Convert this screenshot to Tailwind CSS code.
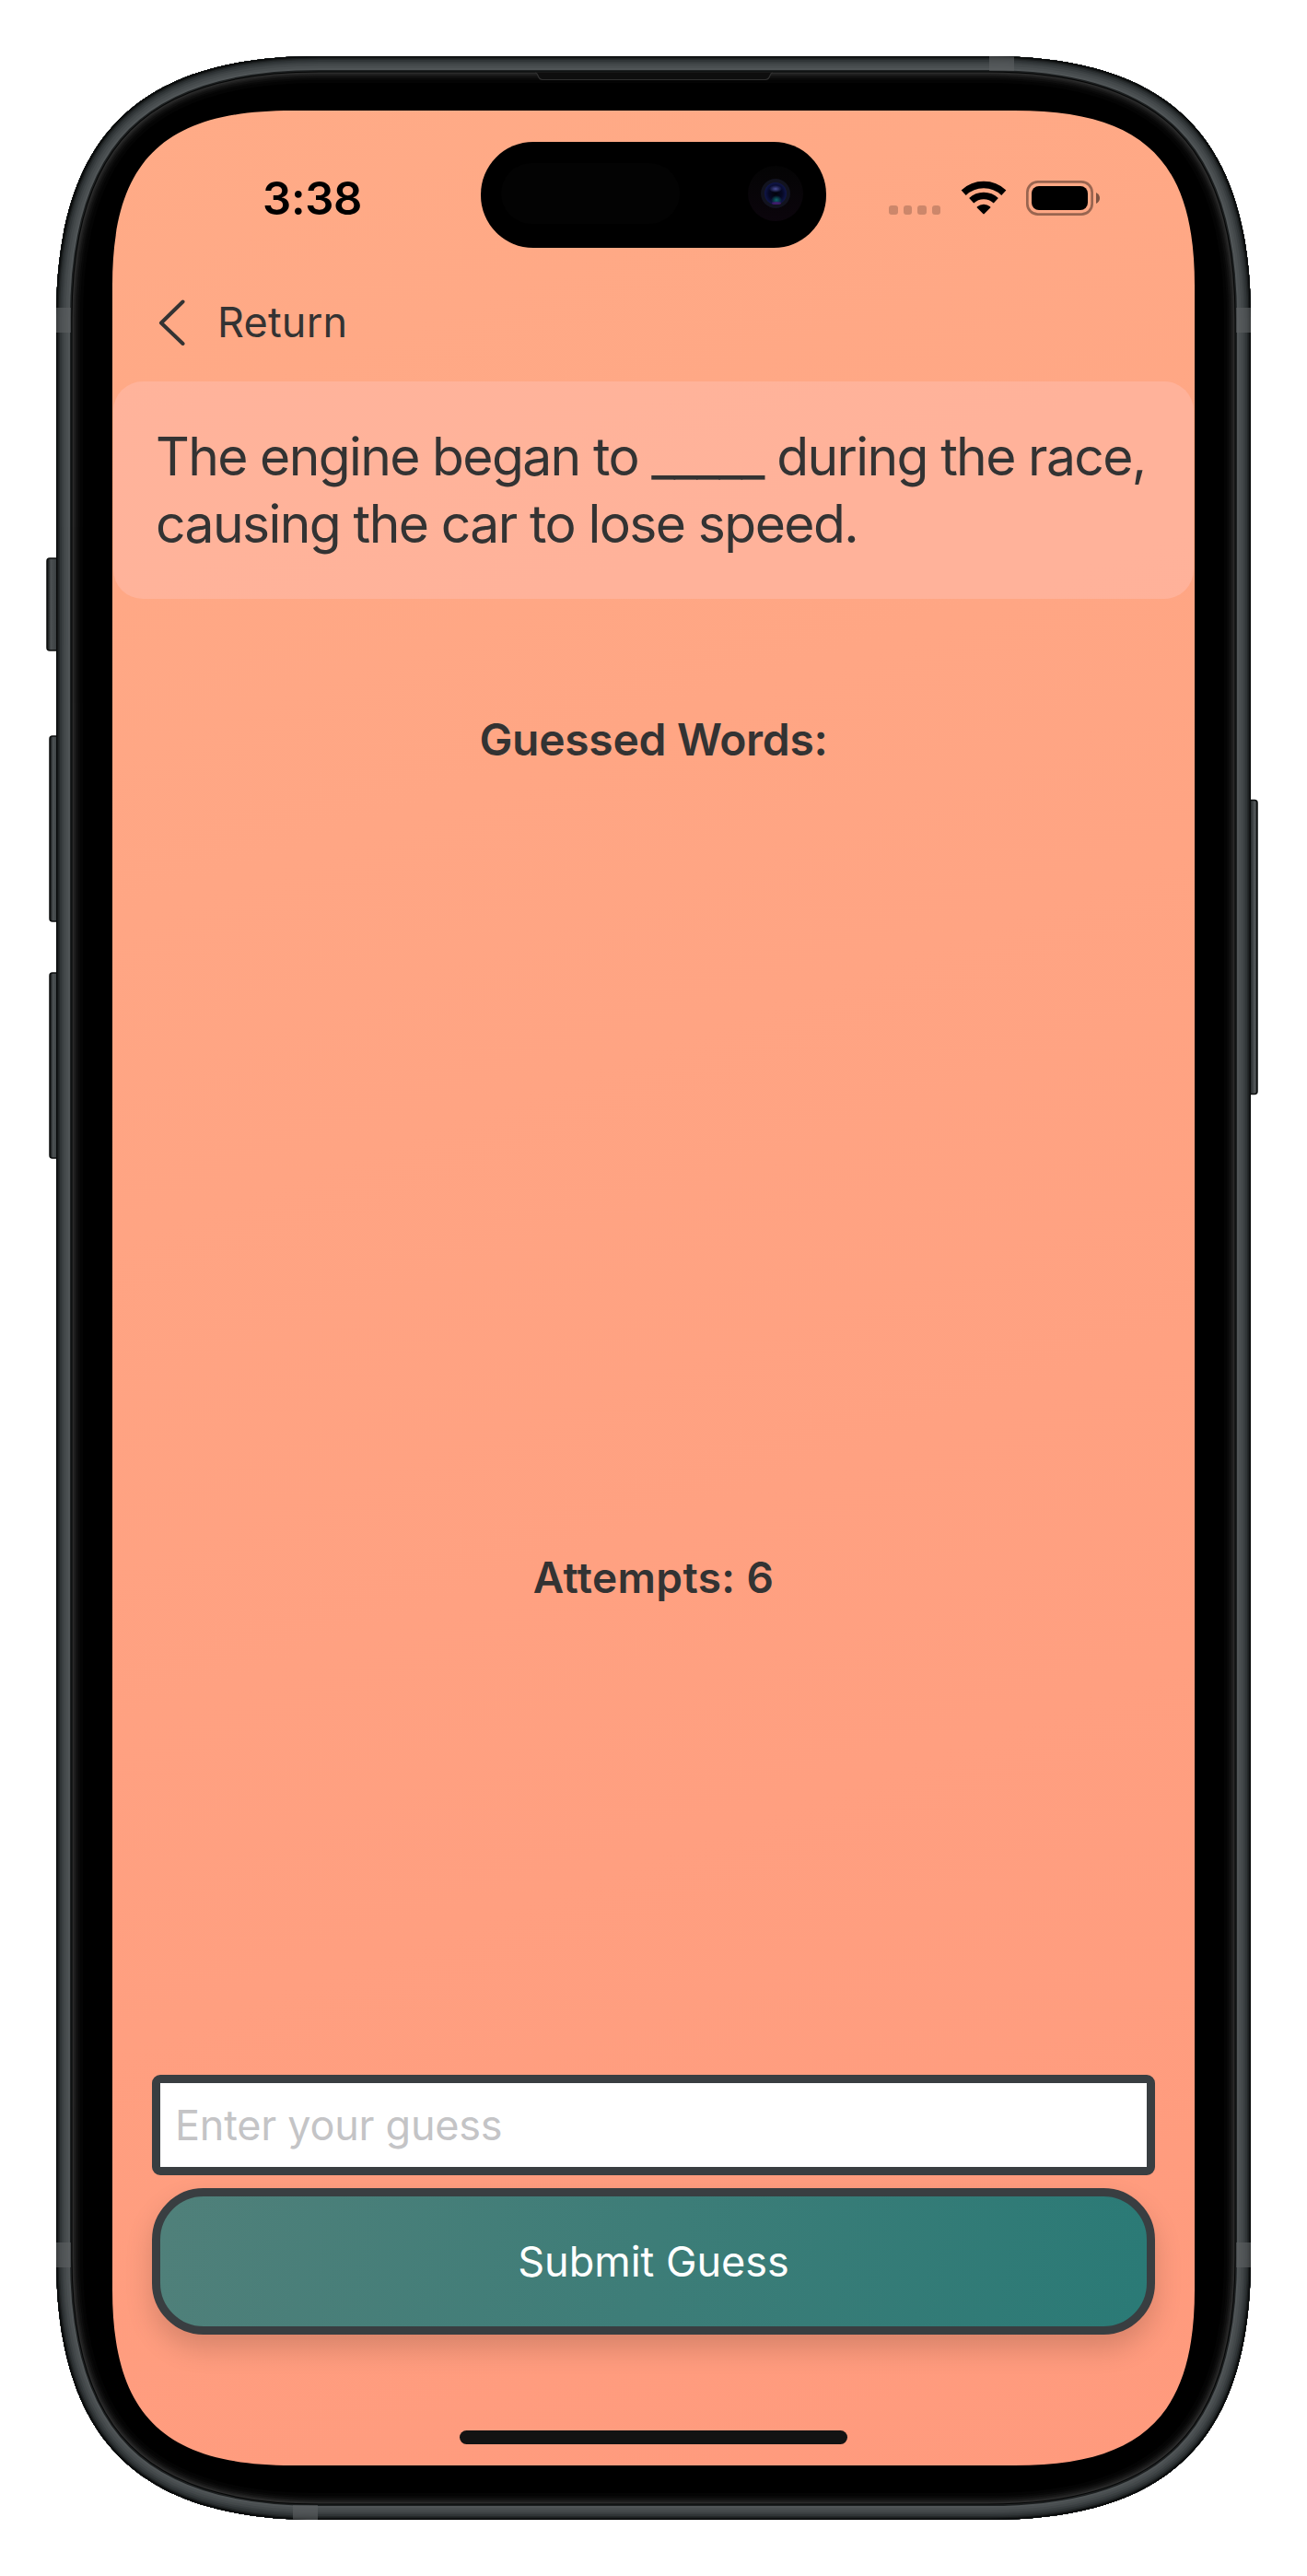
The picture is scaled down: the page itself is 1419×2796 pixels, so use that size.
<!DOCTYPE html>
<html lang="en">
<head>
<meta charset="utf-8">
<title>Guess the Word</title>
<script src="https://cdn.jsdelivr.net/npm/@tailwindcss/browser@4"></script>
</head>
<body class="bg-white font-['Inter',sans-serif] text-[#333333]">
<main class="relative w-[1419px] h-[2796px] overflow-hidden px-[122px] pt-[120px]">

  <!-- Screen -->
  <section class="flex h-[2556px] w-[1175px] flex-col rounded-[120px] bg-[linear-gradient(160deg,#ffab87_0%,#ff9a7d_100%)]">
    <!-- Status bar -->
    <header class="flex items-start pt-[34px] text-black">
      <div class="w-[400px] pt-[37px] pl-[163px]">
        <span class="block text-[49px] leading-[49px] font-semibold tracking-[-0.300px] whitespace-nowrap">3:38</span>
      </div>
      <div class="flex h-[115px] w-[375px] items-center justify-between rounded-[57px] bg-black pr-[25px] pb-[4px] pl-[22px]">
        <div class="h-[66px] w-[194px] rounded-full bg-[#030303]"></div>
        <svg class="h-[60px] w-[60px]" viewBox="0 0 60 60">
          <defs>
            <radialGradient id="lens"><stop offset="0" stop-color="#02030a"/><stop offset=".6" stop-color="#060824"/><stop offset="1" stop-color="#10164a"/></radialGradient>
            <radialGradient id="glow"><stop offset="0" stop-color="#4a4f9c"/><stop offset="1" stop-color="#4a4f9c" stop-opacity="0"/></radialGradient>
            <radialGradient id="teal"><stop offset="0" stop-color="#0d6a6c"/><stop offset="1" stop-color="#0d6a6c" stop-opacity="0"/></radialGradient>
            <linearGradient id="cam" x2="0" y2="1"><stop offset="0" stop-color="#040404"/><stop offset="1" stop-color="#0b050c"/></linearGradient>
          </defs>
          <circle cx="30" cy="30" r="30" fill="url(#cam)"/>
          <circle cx="30" cy="30" r="16" fill="#12131f"/>
          <circle cx="30" cy="30" r="12" fill="url(#lens)"/>
          <ellipse cx="30" cy="25" rx="7" ry="4" fill="url(#glow)"/>
          <ellipse cx="31" cy="37" rx="6" ry="5" fill="url(#teal)"/>
          <ellipse cx="31" cy="40.500" rx="5" ry="1.500" fill="#521a78" opacity=".7"/>
        </svg>
      </div>
      <div class="flex h-[80px] w-[400px] items-end pl-[68px]">
        <div class="flex gap-[6px] pb-px">
          <i class="size-[9.600px] rounded-[3px] bg-black/20"></i>
          <i class="size-[9.600px] rounded-[3px] bg-black/20"></i>
          <i class="size-[9.600px] rounded-[3px] bg-black/20"></i>
          <i class="size-[9.600px] rounded-[3px] bg-black/20"></i>
        </div>
        <svg class="ml-[21.500px] h-[38px] w-[50px]" viewBox="0 0 50 38" fill="none" stroke="#000">
          <path d="M3.200 13.200A31.700 31.700 0 0 1 46.800 13.200" stroke-width="7.400"/>
          <path d="M11.700 21.800A19.300 19.300 0 0 1 38.300 21.800" stroke-width="7.400"/>
          <path d="M17.800 29.400Q17.300 28.800 18 28.200A11 11 0 0 1 32 28.200Q32.700 28.800 32.200 29.400L25.700 36.100Q25 36.800 24.300 36.100Z" fill="#000" stroke="none"/>
        </svg>
        <svg class="ml-[21.500px] h-[38px] w-[82px]" viewBox="0 0 82 38">
          <rect x="1.350" y="1.350" width="70.300" height="35.300" rx="11.500" fill="none" stroke="#000" stroke-opacity=".4" stroke-width="2.700"/>
          <rect x="6" y="6" width="61" height="26" rx="8" fill="#000"/>
          <path d="M76 13Q80 15 80 19T76 25Z" fill="#000" fill-opacity=".5"/>
        </svg>
      </div>
    </header>

    <!-- Navigation -->
    <nav class="mt-[56px] flex h-[50px] items-center pl-[49px]">
      <svg class="h-[50px] w-[31px]" viewBox="0 0 31 50" fill="none" stroke="#333" stroke-width="4" stroke-linecap="round" stroke-linejoin="round"><path d="M27.500 2.500L4 25.500L27.500 48"/></svg>
      <span class="ml-[34px] text-[45px] leading-[50px] tracking-[0.200px] whitespace-nowrap">Return</span>
    </nav>

    <!-- Sentence -->
    <div class="mx-px mt-[39px] h-[236px] rounded-[32px] bg-[#ffbeb0]/50 pt-[45px] pl-[46px] text-[57px] leading-[73px] whitespace-nowrap">
      <p class="tracking-[-1.660px]">The engine began to _____ during the race,</p>
      <p class="tracking-[-1.600px]">causing the car to lose speed.</p>
    </div>

    <h2 class="mt-[123px] text-center text-[48px] leading-[60px] font-semibold tracking-[-0.300px]"><span>Guessed Words:</span></h2>
    <h3 class="mt-[849px] text-center text-[46px] leading-[60px] font-semibold tracking-[0.400px]"><span>Attempts: 6</span></h3>

    <!-- Guess form -->
    <div class="mt-[510px] flex flex-col gap-[14px] px-[43px]">
      <div class="flex h-[109px] items-center rounded-[9px] border-[9px] border-[#393e41] bg-white pl-[16px] text-[45px] tracking-[-0.250px] text-[#c4c4c6]"><span>Enter your guess</span></div>
      <div class="flex h-[159px] items-center justify-center rounded-[56px] border-[9px] border-[#393e41] bg-[#3c7b75] bg-[linear-gradient(100deg,#50807a_0%,#2a7a76_100%)] bg-origin-border text-[45px] text-white shadow-[0_15px_30px_rgba(0,0,0,0.16)]"><span>Submit Guess</span></div>
    </div>

    <div class="mx-auto mt-[104px] h-[15px] w-[421px] rounded-full bg-[#131313]"></div>
  </section>

  <!-- Device body laid over the screen edges -->
  <svg class="pointer-events-none absolute inset-0 h-[2796px] w-[1419px]" viewBox="0 0 1419 2796">
    <defs>
      <path id="body" d="M346 61H1073C1270.300 61 1358 148.700 1358 346V2450C1358 2647.300 1270.300 2735 1073 2735H346C148.700 2735 61 2647.300 61 2450V346C61 148.700 148.700 61 346 61Z"/>
      <path id="ring" clip-rule="evenodd" d="M346 61H1073C1270.300 61 1358 148.700 1358 346V2450C1358 2647.300 1270.300 2735 1073 2735H346C148.700 2735 61 2647.300 61 2450V346C61 148.700 148.700 61 346 61Z M317 120C177 120 122 175 122 310V2485C122 2620 177 2676 317 2676H1102C1242 2676 1297 2620 1297 2485V310C1297 175 1242 120 1102 120Z"/>
      <clipPath id="clip"><use href="#ring"/></clipPath>
      <linearGradient id="btn" x2="1"><stop offset="0" stop-color="#0b0d0d"/><stop offset=".3" stop-color="#4c5153"/><stop offset=".7" stop-color="#3c4143"/><stop offset="1" stop-color="#1a1d1e"/></linearGradient>
      <linearGradient id="btnr" x2="1"><stop offset="0" stop-color="#0b0d0d"/><stop offset=".45" stop-color="#2c3032"/><stop offset=".8" stop-color="#55595b"/><stop offset="1" stop-color="#0b0d0d"/></linearGradient>
    </defs>
    <g fill="url(#btn)" stroke="#0c0e0e" stroke-width="1.500">
      <rect x="51" y="606" width="14" height="100" rx="3"/>
      <rect x="54" y="799" width="12" height="201" rx="3"/>
      <rect x="54" y="1056" width="12" height="201" rx="3"/>
      <rect x="1353" y="868.500" width="12" height="319" rx="3" fill="url(#btnr)"/>
    </g>
    <g clip-path="url(#clip)" fill="none">
      <use href="#body" fill="#000"/>
      <use href="#body" stroke="#040404" stroke-width="58"/>
      <use href="#body" stroke="#080808" stroke-width="52"/>
      <use href="#body" stroke="#0f0f0f" stroke-width="48"/>
      <use href="#body" stroke="#171717" stroke-width="44"/>
      <use href="#body" stroke="#202020" stroke-width="41"/>
      <use href="#body" stroke="#2a2a2a" stroke-width="38"/>
      <use href="#body" stroke="#050606" stroke-width="35"/>
      <use href="#body" stroke="#1d2021" stroke-width="33"/>
      <use href="#body" stroke="#505557" stroke-width="30"/>
      <use href="#body" stroke="#4a4f51" stroke-width="26"/>
      <use href="#body" stroke="#43484a" stroke-width="21"/>
      <use href="#body" stroke="#3a3f41" stroke-width="16"/>
      <use href="#body" stroke="#303537" stroke-width="12"/>
      <use href="#body" stroke="#25292a" stroke-width="8"/>
      <use href="#body" stroke="#171a1b" stroke-width="5"/>
      <use href="#body" stroke="#090b0b" stroke-width="2.500"/>
      <g fill="#5d6162" fill-opacity=".6">
        <path d="M61 334h16v27H61zM1342 334h16v27h-16zM61 2434h16v27H61zM1342 2434h16v27h-16zM1074 61h27v16h-27zM318 2719h27v16h-27z"/>
      </g>
      <path d="M581 79Q583 79 584 82Q585.500 86.500 589 86.500H831Q834.500 86.500 836 82Q837 79 839 79" fill="#0e0e0e" stroke="#303030" stroke-width="1.200"/>
    </g>
  </svg>
</main>
</body>
</html>
